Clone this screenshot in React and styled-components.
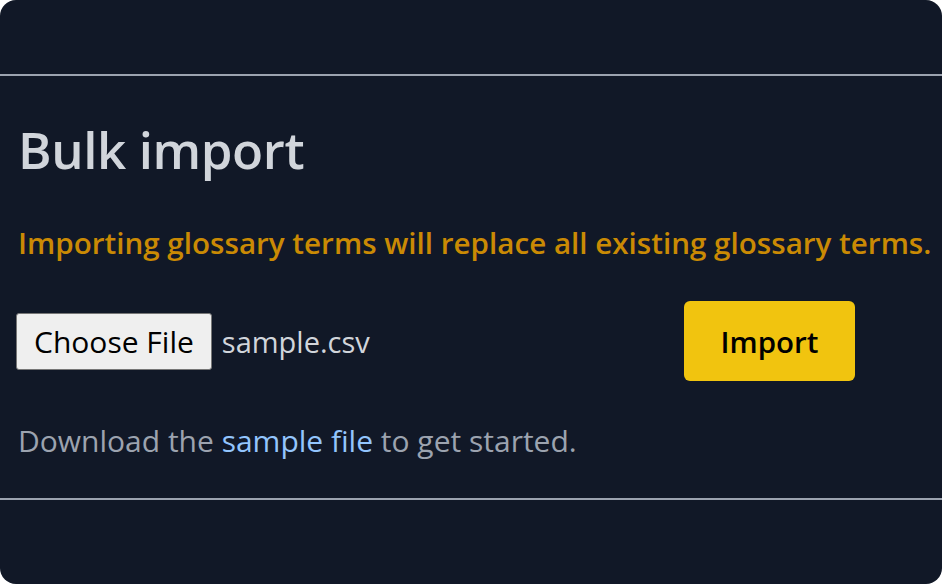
import React from 'react';
import styled, { createGlobalStyle } from 'styled-components';

const GlobalStyle = createGlobalStyle`
    html, body {
        margin: 0;
        padding: 0;
        background: #ffffff;
    }
    * {
        box-sizing: border-box;
    }
`;

const Card = styled.div`
    width: 942px;
    height: 584px;
    background: #111827;
    border-radius: 16px;
    display: flex;
    flex-direction: column;
    font-family: 'Open Sans', 'Noto Sans', sans-serif;
    overflow: hidden;
`;

const Header = styled.div`
    height: 76px;
    border-bottom: 2px solid #9ca3af;
`;

const Body = styled.div`
    flex: 1;
    padding: 0 18px;
    display: flex;
    flex-direction: column;
`;

const Footer = styled.div`
    height: 86px;
    border-top: 2px solid #9ca3af;
`;

const Title = styled.h1`
    margin: 40px 0 0;
    font-size: 51px;
    font-weight: 600;
    line-height: 66px;
    color: #d1d5db;
    letter-spacing: -0.4px;
`;

const Warning = styled.p`
    margin: 41px 0 0;
    font-size: 29.6px;
    font-weight: 600;
    line-height: 40px;
    color: #ca8a04;
    white-space: nowrap;
`;

const UploadRow = styled.div`
    margin-top: 38px;
    display: flex;
    align-items: center;
`;

const FileField = styled.div`
    width: 666px;
    display: flex;
    align-items: center;
    gap: 10px;
`;

const ChooseButton = styled.button`
    height: 57px;
    padding: 0 17px;
    margin-left: -2px;
    background: #efefef;
    border: 1px solid #767676;
    border-radius: 3px;
    font-family: inherit;
    font-size: 30px;
    color: #000000;
`;

const FileName = styled.span`
    font-size: 29px;
    color: #d1d5db;
`;

const ImportButton = styled.button`
    width: 171px;
    height: 80px;
    background: #f1c40f;
    border: none;
    border-radius: 6px;
    font-family: inherit;
    font-size: 29.5px;
    font-weight: 600;
    color: #000000;
`;

const Hint = styled.p`
    margin: 40px 0 0;
    font-size: 30px;
    line-height: 40px;
    color: #9ca3af;
`;

const Link = styled.a`
    color: #93c5fd;
    text-decoration: none;
`;

const App = () => {
    return (
        <>
            <GlobalStyle />
            <Card>
                <Header />
                <Body>
                    <Title>Bulk import</Title>
                    <Warning>Importing glossary terms will replace all existing glossary terms.</Warning>
                    <UploadRow>
                        <FileField>
                            <ChooseButton>Choose File</ChooseButton>
                            <FileName>sample.csv</FileName>
                        </FileField>
                        <ImportButton>Import</ImportButton>
                    </UploadRow>
                    <Hint>
                        Download the <Link href="#">sample file</Link> to get started.
                    </Hint>
                </Body>
                <Footer />
            </Card>
        </>
    );
};

export default App;
